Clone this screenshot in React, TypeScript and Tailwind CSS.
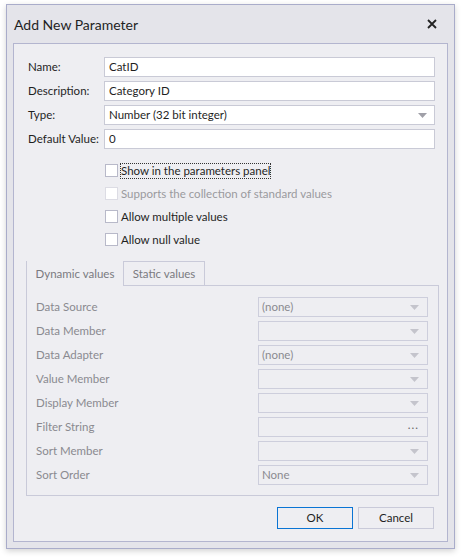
import React from "react";

const font = { fontFamily: 'Lato, "Segoe UI", sans-serif' };

function Arrow({ light }: { light?: boolean }) {
  return (
    <svg width="9" height="5" viewBox="0 0 9 5" className="shrink-0">
      <path d="M0 0h9L4.5 5z" fill={light ? "#c4c4cc" : "#a0a0a8"} />
    </svg>
  );
}

function TextBox({ value }: { value: string }) {
  return (
    <div className="h-[20px] w-[331px] border border-[#c9cad6] bg-white px-[4px] flex items-center text-[#1f1f1f]">
      {value}
    </div>
  );
}

function Check({ label, disabled, focused }: { label: string; disabled?: boolean; focused?: boolean }) {
  return (
    <div className="flex items-center h-[23px]">
      <div
        className={
          "w-[13px] h-[13px] border bg-white " +
          (disabled ? "border-[#dcdce4] bg-[#f3f3f6]" : "border-[#b8b9c9]")
        }
      />
      <span
        className={
          "ml-[3px] leading-[14px] whitespace-nowrap " +
          (disabled ? "text-[#9a9a9e]" : "text-[#1f1f1f]") +
          (focused ? " outline outline-1 outline-dotted outline-[#333]" : "")
        }
      >
        {label}
      </span>
    </div>
  );
}

const rows: { label: string; value: string; dots?: boolean }[] = [
  { label: "Data Source", value: "(none)" },
  { label: "Data Member", value: "" },
  { label: "Data Adapter", value: "(none)" },
  { label: "Value Member", value: "" },
  { label: "Display Member", value: "" },
  { label: "Filter String", value: "", dots: true },
  { label: "Sort Member", value: "" },
  { label: "Sort Order", value: "None" },
];

export default function App() {
  return (
    <div className="w-[461px] h-[557px] bg-white pt-[4px] pl-[6px] text-[11.5px]" style={font}>
      <div className="w-[449px] h-[545px] border border-[#a9acca] bg-[#e4e4ea] shadow-[0_2px_6px_rgba(0,0,0,0.18)] flex flex-col">
        {/* Title bar */}
        <div className="h-[38px] flex items-center justify-between pl-[7px] pr-[17px]">
          <span className="text-[14px] text-[#1f1f1f]">Add New Parameter</span>
          <svg width="10" height="10" viewBox="0 0 10 10">
            <path d="M1 1l8 8M9 1l-8 8" stroke="#222" strokeWidth="1.8" />
          </svg>
        </div>

        {/* Content */}
        <div className="mx-[6px] h-[499px] border border-[#b3b5cf] bg-[#eeeef2] flex flex-col">
          <div className="pt-[13px] pl-[14px] grid grid-cols-[76px_331px] gap-y-[4px] items-center">
            <span className="text-[#1f1f1f] whitespace-nowrap">Name:</span>
            <TextBox value="CatID" />
            <span className="text-[#1f1f1f] whitespace-nowrap">Description:</span>
            <TextBox value="Category ID" />
            <span className="text-[#1f1f1f] whitespace-nowrap">Type:</span>
            <div className="h-[20px] w-[331px] border border-[#c9cad6] bg-white pl-[4px] pr-[7px] flex items-center justify-between text-[#1f1f1f]">
              <span>Number (32 bit integer)</span>
              <Arrow />
            </div>
            <span className="text-[#1f1f1f] whitespace-nowrap">Default Value:</span>
            <TextBox value="0" />
          </div>

          <div className="pl-[91px] pt-[10px] flex flex-col">
            <Check label="Show in the parameters panel" focused />
            <Check label="Supports the collection of standard values" disabled />
            <Check label="Allow multiple values" />
            <Check label="Allow null value" />
          </div>

          {/* Tabs */}
          <div className="ml-[12px] mt-[10px] w-[413px]">
            <div className="flex h-[25px]">
              <div className="w-[97px] border-l border-[#c9cad9] flex items-center justify-center text-[#7a7a80]">
                Dynamic values
              </div>
              <div className="w-[82px] border border-[#c9cad9] flex items-center justify-center text-[#7a7a80]">
                Static values
              </div>
              <div className="flex-1 border-b border-[#c9cad9]" />
            </div>
            <div className="h-[210px] border border-t-0 border-[#c9cad9] pt-[11px] pl-[9px] grid grid-cols-[222px_170px] gap-y-[4px] content-start items-center">
              {rows.map((r) => (
                <React.Fragment key={r.label}>
                  <span className="text-[#8a8a90]">{r.label}</span>
                  <div className="h-[20px] border border-[#cdcedc] pl-[3px] pr-[8px] flex items-center justify-between text-[#8a8a90]">
                    <span>{r.value}</span>
                    {r.dots ? (
                      <span className="text-[#666] tracking-[1px] leading-none mb-[4px]">...</span>
                    ) : (
                      <Arrow light />
                    )}
                  </div>
                </React.Fragment>
              ))}
            </div>
          </div>

          {/* Buttons */}
          <div className="flex justify-end gap-[5px] pr-[13px] mt-[11px]">
            <button className="w-[76px] h-[22px] border border-[#0a74d4] bg-[#eeeef2] text-[#1f1f1f] text-[11.5px]" style={font}>
              OK
            </button>
            <button className="w-[76px] h-[22px] border border-[#c9cad9] bg-[#eeeef2] text-[#1f1f1f] text-[11.5px]" style={font}>
              Cancel
            </button>
          </div>
        </div>
      </div>
    </div>
  );
}
